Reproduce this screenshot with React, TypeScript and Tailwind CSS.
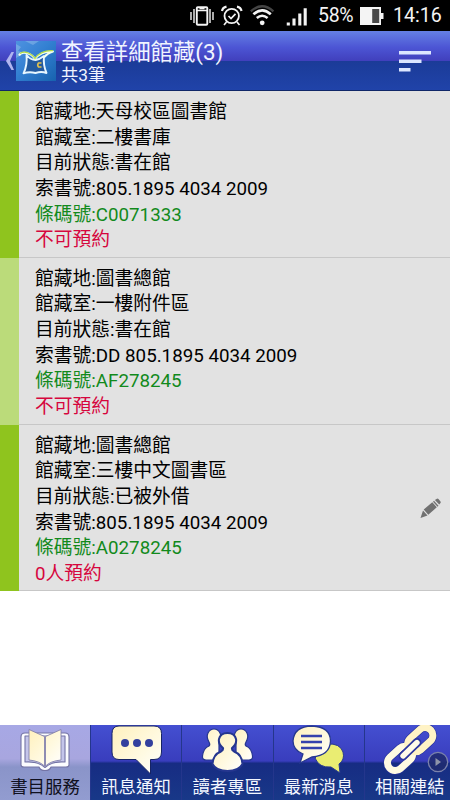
import type { ReactNode } from "react";

type Holding = {
  place: string;
  room: string;
  status: string;
  callNo: string;
  barcode: string;
  reserve: string;
  stripe: string;
  editable?: boolean;
};

const holdings: Holding[] = [
  { place: "天母校區圖書館", room: "二樓書庫", status: "書在館", callNo: "805.1895 4034 2009", barcode: "C0071333", reserve: "不可預約", stripe: "bg-[#8fc41e]" },
  { place: "圖書總館", room: "一樓附件區", status: "書在館", callNo: "DD 805.1895 4034 2009", barcode: "AF278245", reserve: "不可預約", stripe: "bg-[#bbdb7a]" },
  { place: "圖書總館", room: "三樓中文圖書區", status: "已被外借", callNo: "805.1895 4034 2009", barcode: "A0278245", reserve: "0人預約", stripe: "bg-[#8fc41e]", editable: true },
];

function StatusBar() {
  return (
    <div className="flex h-[31px] shrink-0 bg-black text-[#f4f4f4]">
      <svg className="ml-[188px] h-[31px] w-[126px] shrink-0" viewBox="188 0 126 31" fill="none" stroke="#f4f4f4">
        <path d="M191 12v8M194 9v14M210 9v14M213 12v8" strokeWidth="1.4" />
        <rect x="196.8" y="7.2" width="10.5" height="17.6" rx="1" strokeWidth="1.9" />
        <path d="M197 10.5h10M199.5 8.5h5" strokeWidth="1.4" />
        <circle cx="231.7" cy="16" r="7.2" strokeWidth="1.8" />
        <path d="M228.5 16l2.5 2.5 4.5-4.7M226.5 22l-2.5 3M237 22l2.5 3" strokeWidth="1.7" />
        <path d="M222 11q.5-3.5 4.5-4.4M241.5 11q-.5-3.5-4.5-4.4" strokeWidth="2.2" />
        <path d="M250.8 11.3q11.2-10 22.6 0" stroke="#444" strokeWidth="2.4" />
        <path d="M253.4 14.3q8.8-8 17.4 0M256.8 18q5.3-4.5 10.8 0" strokeWidth="2.6" />
        <circle cx="262.2" cy="22.8" r="2.4" fill="#f4f4f4" stroke="none" />
        <path d="M288.3 25.5v-3M294 25.5v-7M299.8 25.5v-12M305.2 25.5V8.3" strokeWidth="3.1" />
      </svg>
      <span className="mt-[6px] ml-[4px] w-[37px] shrink-0 text-[19.5px] leading-[20px] tracking-[-0.3px] whitespace-nowrap">58%</span>
      <svg className="ml-[5px] h-[31px] w-6 shrink-0" viewBox="360 0 24 31">
        <path d="M360 7h21v6h2.5v6H381v6h-21z" fill="#f4f4f4" />
        <path d="M372.2 9h7v14h-7z" fill="#484848" />
      </svg>
      <span className="mt-[5px] ml-[9px] shrink-0 text-[19.6px] leading-[22px] whitespace-nowrap">14:16</span>
    </div>
  );
}

function AppLogo() {
  return (
    <svg className="mt-[10px] ml-[2px] h-10 w-10 shrink-0" viewBox="0 0 40 40" fill="none">
      <defs>
        <linearGradient id="sky" x1="0" y1="0" x2="1" y2="1">
          <stop stopColor="#4f92e0" />
          <stop offset=".45" stopColor="#3380d2" />
          <stop offset="1" stopColor="#1762ae" />
        </linearGradient>
      </defs>
      <path d="M0 0h40v40H0z" fill="url(#sky)" />
      <path d="M0 3l5 3-3 4 7 2-9 5zM9 0l8 4 6-4z" fill="#a7cbf0" opacity=".4" />
      <path d="M10.5 14q4 5 9 5 4-.5 8.500-4-1 9 2.500 17-5-2-11 0-6-1.500-12 .3 4-8 3-18.300z" fill="#235a9f" stroke="#e6f6ff" strokeWidth="1.900" strokeLinejoin="round" />
      <path d="M3 14.500q2-3.500 7-2.500 6 1 9 6Q25 10 37 10.500q-6 2-9 6" stroke="#f2fff2" strokeWidth="2" strokeLinejoin="round" />
      <path d="M4 12.500q3-2 7-1 5 1.500 8 6Q25 9 37 9.700" stroke="#b4dc48" strokeWidth="1.300" />
      <path d="M25.500 22h-3q-1.600 2 0 4h3" stroke="#e2c24b" strokeWidth="1.600" />
    </svg>
  );
}

function Header() {
  return (
    <header className="flex h-[60px] shrink-0 border-b border-[#102768] bg-[linear-gradient(180deg,#6580e4_0%,#4c55d4_28%,#4140bd_50%,#1b3b98_51%,#2043a9_100%)] text-[#f0f4ff]">
      <svg className="mt-[20px] ml-[5px] h-5 w-[9px] shrink-0" viewBox="0 0 9 20">
        <path d="M6.5 1H9L5 10l4 9H6.5L1 10z" fill="#b0b5ef" />
      </svg>
      <AppLogo />
      <div className="ml-[5px] grow">
        <h1 className="mt-[7px] text-[22.4px] leading-[28px] font-normal whitespace-nowrap">查看詳細館藏(3)</h1>
        <p className="mt-[-1px] text-[17.3px] leading-[20px]">共3筆</p>
      </div>
      <svg className="mt-[19px] mr-[18px] h-[24px] w-[33px] shrink-0" viewBox="398 50 33 24" fill="#dce6ff">
        <path d="M398 51h32v3.500h-32zM398 59.500h22.500V63H398zM398 68h11.500v3.500H398z" />
      </svg>
    </header>
  );
}

function Pencil() {
  return (
    <svg className="mt-[73px] mr-[8px] h-[22px] w-[22px] shrink-0" viewBox="0 0 22 22" fill="#717171">
      <path d="M.5 20L3 12.500l4.500 5zM3.700 11.500l8.600-7.200 4.500 5-8.500 7.400zM13 3.700l1-.9 4.500 5-1 .9zM14.900 2l1.600-1.100q1-.7 2 .2l2 2.300q.6.900-.2 1.800l-1.100 1.300z" />
    </svg>
  );
}

function HoldingRow({ item }: { item: Holding }) {
  return (
    <li className="flex h-[166.8px] shrink-0">
      <div className={`w-[19px] shrink-0 ${item.stripe}`} />
      <div className="flex grow border-b border-[#c7c7c7] bg-[#e2e2e2]">
        <div className="grow pt-[9px] pl-[16px] text-[18.75px] leading-[25.65px] whitespace-nowrap text-black">
          <p>館藏地:{item.place}</p>
          <p>館藏室:{item.room}</p>
          <p>目前狀態:{item.status}</p>
          <p>索書號:{item.callNo}</p>
          <p className="text-[#128a1c]">條碼號:{item.barcode}</p>
          <p className="text-[#d6063e]">{item.reserve}</p>
        </div>
        {item.editable && <Pencil />}
      </div>
    </li>
  );
}

function BookIcon() {
  return (
    <g strokeLinejoin="round">
      <path d="M25 8q-4 0-4 4v28q0 2 3 2h15q1 3.500 6 3.500t6-3.500h15q3 0 3-2V12q0-4-4-4z" fill="#fbfcff" stroke="#7474a5" strokeWidth="1.100" />
      <path d="M25 11h40v26q-13-1-20 5.500-7-6.500-20-5.500z" fill="#c4c5ea" stroke="#7474a5" strokeWidth="1.100" />
      <path d="M29 4.500l15.500 7V41q-5-5-15.500-6zM61 4.500l-15.500 7V41q5-5 15.500-6z" fill="url(#cream)" stroke="#8582ac" strokeWidth=".9" />
    </g>
  );
}

function MessageIcon() {
  return (
    <g>
      <path d="M28 1h35q7.500 0 7.500 7.500v18.500q0 7.500-7.500 7.500h-3.500V49L45 34.500H28q-7 0-7-7.500V8.500Q21 1 28 1z" fill="url(#cream)" stroke="#172464" />
      <g fill="#33409e">
        <circle cx="34" cy="18" r="4" />
        <circle cx="46" cy="18" r="4" />
        <circle cx="58" cy="18" r="4" />
      </g>
    </g>
  );
}

function PeopleIcon() {
  return (
    <g fill="url(#cream)" stroke="#25368f" strokeWidth="1.200">
      <path d="M37 35H24q-4 0-3.500-4 1-8 6.500-10 1.500-1.500 0-4-3-5-1-9 2-4 6-4t6 4q2 4-1 9z" />
      <path d="M54 35h13q4 0 3.500-4-1-8-6.500-10-1.500-1.500 0-4 3-5 1-9-2-4-6-4t-6 4q-2 4 1 9z" />
      <path d="M41 23q-5-4-4-9 1.500-6 8.500-6t8.500 6q1 5-4 9-.5 2 2 3.500 8 3 8.500 12.500Q57 46 45.500 46T30.500 39q.5-9.500 8.500-12.500 2.500-1.500 2-3.500z" strokeWidth="2" />
    </g>
  );
}

function NewsIcon() {
  return (
    <g>
      <path d="M53 19q13-1 16 8 2 8-4 12l1 9-9-6q-12 1-16-9z" fill="#eaed72" stroke="#26388f" />
      <path d="M38 1q18.500 1 18.500 15Q56 30.500 38 32l-12 6 3-9q-10-4-10-13Q20 1.500 38 1z" fill="url(#cream)" stroke="#26388f" strokeWidth="1.300" />
      <path d="M27 11h21M27 17h21M27 23h21" stroke="#3542ad" strokeWidth="2.300" />
    </g>
  );
}

function LinkIcon() {
  return (
    <g fill="none" strokeLinecap="round">
      <g stroke="#26329a" strokeWidth="8.200">
        <rect x="20.800" y="25.700" width="28.500" height="15.600" rx="7.800" transform="rotate(-42 35 33.500)" />
        <rect x="41" y="6.900" width="28.500" height="15.600" rx="7.800" transform="rotate(-42 55.300 14.700)" />
      </g>
      <g stroke="#fffae2" strokeWidth="7">
        <rect x="20.800" y="25.700" width="28.500" height="15.600" rx="7.800" transform="rotate(-42 35 33.500)" />
        <rect x="41" y="6.900" width="28.500" height="15.600" rx="7.800" stroke="#fff3c6" transform="rotate(-42 55.300 14.700)" />
      </g>
      <path d="M38 31l14-13.500" stroke="#2c36a0" strokeWidth="8.800" />
      <path d="M38 31l14-13.500" stroke="#fffbea" strokeWidth="5.400" />
    </g>
  );
}

const tabs: { label: string; icon: ReactNode }[] = [
  { label: "書目服務", icon: <BookIcon /> },
  { label: "訊息通知", icon: <MessageIcon /> },
  { label: "讀者專區", icon: <PeopleIcon /> },
  { label: "最新消息", icon: <NewsIcon /> },
  { label: "相關連結", icon: <LinkIcon /> },
];

function BottomTabs() {
  return (
    <nav className="relative flex h-[75px] w-[450px] shrink-0 overflow-hidden">
      {tabs.map((tab, index) => (
        <div
          key={tab.label}
          className={
            index === 0
              ? "h-[75px] w-[90px] shrink-0 bg-[linear-gradient(180deg,#a7a8e5_0%,#a8a6df_45%,#8a94c9_56%,#929cd0_100%)] text-[#101020]"
              : "h-[75px] w-[91.3px] shrink-0 border-l border-[#24368c] bg-[linear-gradient(180deg,#444fd1_0%,#393dbd_48%,#172c83_51%,#183888_100%)] text-[#f3f7ff]"
          }
        >
          <svg className="block h-[50px] w-[90px]" viewBox="0 0 90 50">
            <defs>
              <linearGradient id="cream" x1="0" y1="0" x2="1" y2="1">
                <stop stopColor="#fff0bd" />
                <stop offset=".6" stopColor="#fffae2" />
                <stop offset="1" stopColor="#ffffff" />
              </linearGradient>
            </defs>
            {tab.icon}
          </svg>
          <p className="mt-px w-[90px] text-center text-[17.4px] leading-[23px] whitespace-nowrap">{tab.label}</p>
        </div>
      ))}
      <svg className="absolute top-[26px] left-[427px] h-[22px] w-[22px]" viewBox="0 0 22 22">
        <circle cx="11" cy="11" r="9.700" fill="#202b70" fillOpacity=".88" stroke="#7b82ac" strokeWidth="1.300" />
        <path d="M8.500 7l5.500 4-5.500 4z" fill="#8e94a9" />
      </svg>
    </nav>
  );
}

export default function App() {
  return (
    <main lang="zh-Hant" className="flex h-[800px] w-[450px] flex-col overflow-hidden bg-white font-[Roboto,'Noto_Sans_CJK_TC',sans-serif]">
      <StatusBar />
      <Header />
      <ul className="grow">
        {holdings.map((item) => <HoldingRow key={item.barcode} item={item} />)}
      </ul>
      <BottomTabs />
    </main>
  );
}
